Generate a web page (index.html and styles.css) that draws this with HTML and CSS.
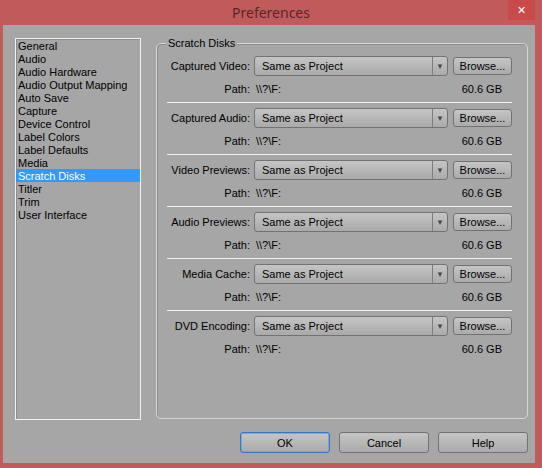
FILE: index.html
```html
<!DOCTYPE html>
<html lang="en">
<head>
    <meta charset="UTF-8">
    <title>Preferences</title>
    <link rel="stylesheet" href="styles.css">
</head>
<body>
    <div class="window">
        <div class="titlebar">
            <span class="title">Preferences</span>
            <span class="close">&#x2715;</span>
        </div>
        <div class="client">
            <div class="main">
                <ul class="nav">
                    <li>General</li>
                    <li>Audio</li>
                    <li>Audio Hardware</li>
                    <li>Audio Output Mapping</li>
                    <li>Auto Save</li>
                    <li>Capture</li>
                    <li>Device Control</li>
                    <li>Label Colors</li>
                    <li>Label Defaults</li>
                    <li>Media</li>
                    <li class="selected">Scratch Disks</li>
                    <li>Titler</li>
                    <li>Trim</li>
                    <li>User Interface</li>
                </ul>
                <div class="group">
                    <span class="group-title">Scratch Disks</span>
                    <div class="disk">
                        <div class="row">
                            <label>Captured Video:</label>
                            <div class="select"><span class="select-text">Same as Project</span><span class="arrow">&#9660;</span></div>
                            <button class="btn browse">Browse...</button>
                        </div>
                        <div class="row path">
                            <label>Path:</label>
                            <span class="value">\\?\F:</span>
                            <span class="size">60.6 GB</span>
                        </div>
                    </div>
                    <div class="disk">
                        <div class="row">
                            <label>Captured Audio:</label>
                            <div class="select"><span class="select-text">Same as Project</span><span class="arrow">&#9660;</span></div>
                            <button class="btn browse">Browse...</button>
                        </div>
                        <div class="row path">
                            <label>Path:</label>
                            <span class="value">\\?\F:</span>
                            <span class="size">60.6 GB</span>
                        </div>
                    </div>
                    <div class="disk">
                        <div class="row">
                            <label>Video Previews:</label>
                            <div class="select"><span class="select-text">Same as Project</span><span class="arrow">&#9660;</span></div>
                            <button class="btn browse">Browse...</button>
                        </div>
                        <div class="row path">
                            <label>Path:</label>
                            <span class="value">\\?\F:</span>
                            <span class="size">60.6 GB</span>
                        </div>
                    </div>
                    <div class="disk">
                        <div class="row">
                            <label>Audio Previews:</label>
                            <div class="select"><span class="select-text">Same as Project</span><span class="arrow">&#9660;</span></div>
                            <button class="btn browse">Browse...</button>
                        </div>
                        <div class="row path">
                            <label>Path:</label>
                            <span class="value">\\?\F:</span>
                            <span class="size">60.6 GB</span>
                        </div>
                    </div>
                    <div class="disk">
                        <div class="row">
                            <label>Media Cache:</label>
                            <div class="select"><span class="select-text">Same as Project</span><span class="arrow">&#9660;</span></div>
                            <button class="btn browse">Browse...</button>
                        </div>
                        <div class="row path">
                            <label>Path:</label>
                            <span class="value">\\?\F:</span>
                            <span class="size">60.6 GB</span>
                        </div>
                    </div>
                    <div class="disk">
                        <div class="row">
                            <label>DVD Encoding:</label>
                            <div class="select"><span class="select-text">Same as Project</span><span class="arrow">&#9660;</span></div>
                            <button class="btn browse">Browse...</button>
                        </div>
                        <div class="row path">
                            <label>Path:</label>
                            <span class="value">\\?\F:</span>
                            <span class="size">60.6 GB</span>
                        </div>
                    </div>
                </div>
            </div>
            <div class="buttons">
                <button class="btn action default">OK</button>
                <button class="btn action">Cancel</button>
                <button class="btn action">Help</button>
            </div>
        </div>
    </div>
</body>
</html>
```

FILE: styles.css
```css
body {
    margin: 0;
    background: #c15a5b;
    font-family: "Liberation Sans", Arial, sans-serif;
    font-size: 11px;
    color: #000;
}
.window {
    width: 542px;
    height: 468px;
    display: flex;
    flex-direction: column;
}
.titlebar {
    height: 25px;
    display: flex;
    align-items: center;
    justify-content: center;
    position: relative;
}
.title {
    font-family: "Noto Sans", sans-serif;
    font-size: 14px;
    color: #552828;
}
.close {
    position: absolute;
    top: 0;
    right: 7px;
    width: 27px;
    height: 20px;
    background: #c94a4a;
    color: #fff;
    display: flex;
    align-items: center;
    justify-content: center;
    font-size: 11px;
    font-weight: bold;
    font-family: "DejaVu Sans", sans-serif;
}
.client {
    flex: 1;
    margin: 0 7px 5px 3px;
    background: #a6a6a6;
    display: flex;
    flex-direction: column;
    padding: 13px 7px 10px 12px;
}
.main {
    display: flex;
    gap: 15px;
    height: 382px;
}
.nav {
    width: 126px;
    box-sizing: border-box;
    margin: 0;
    padding: 0;
    list-style: none;
    border: 1px solid #f2f2f2;
    box-shadow: inset 1px 1px 0 #8c8c8c;
}
.nav li {
    height: 13px;
    line-height: 14px;
    padding-left: 2px;
    white-space: nowrap;
}
.nav li.selected {
    background: #3399ff;
    color: #fff;
}
.group {
    flex: 1;
    position: relative;
    margin: 5px 0 1px;
    padding: 7px 15px 0 10px;
    border: 1px solid #d6d6d6;
    border-radius: 5px;
    box-shadow: inset 1px 1px 0 #8e8e8e;
}
.group-title {
    position: absolute;
    top: -7px;
    left: 9px;
    padding: 0 2px;
    line-height: 13px;
    background: #a6a6a6;
}
.disk {
    padding: 5px 0 6px;
    border-bottom: 1px solid #f2f2f2;
}
.disk:last-child {
    border-bottom: none;
}
.row {
    display: flex;
    align-items: center;
    height: 20px;
}
.row label {
    width: 83px;
    text-align: right;
    margin-right: 4px;
    white-space: nowrap;
}
.path {
    height: 14px;
    margin-top: 6px;
}
.select {
    flex: 1;
    height: 20px;
    box-sizing: border-box;
    display: flex;
    align-items: center;
    border: 1px solid #727272;
    border-radius: 3px;
    background: linear-gradient(#c5c5c5, #aaaaaa);
}
.select-text {
    flex: 1;
    padding-left: 7px;
}
.arrow {
    width: 14px;
    height: 100%;
    display: flex;
    align-items: center;
    justify-content: center;
    border-left: 1px solid #7c7c7c;
    color: #4a4a4a;
    font-size: 8px;
}
.btn {
    font-family: "Liberation Sans", Arial, sans-serif;
    font-size: 11px;
    color: #000;
    padding: 0;
    border: 1px solid #727272;
    border-radius: 3px;
    background: linear-gradient(#c5c5c5, #aaaaaa);
}
.browse {
    width: 59px;
    height: 18px;
    margin-left: 5px;
}
.value {
    flex: 1;
    padding-left: 2px;
}
.size {
    padding-right: 10px;
}
.buttons {
    display: flex;
    justify-content: flex-end;
    gap: 9px;
    margin-top: 12px;
}
.action {
    width: 90px;
    height: 21px;
}
.action.default {
    border-color: #3b74c2;
    box-shadow: inset 0 0 0 1px #7aa8de;
}
```
